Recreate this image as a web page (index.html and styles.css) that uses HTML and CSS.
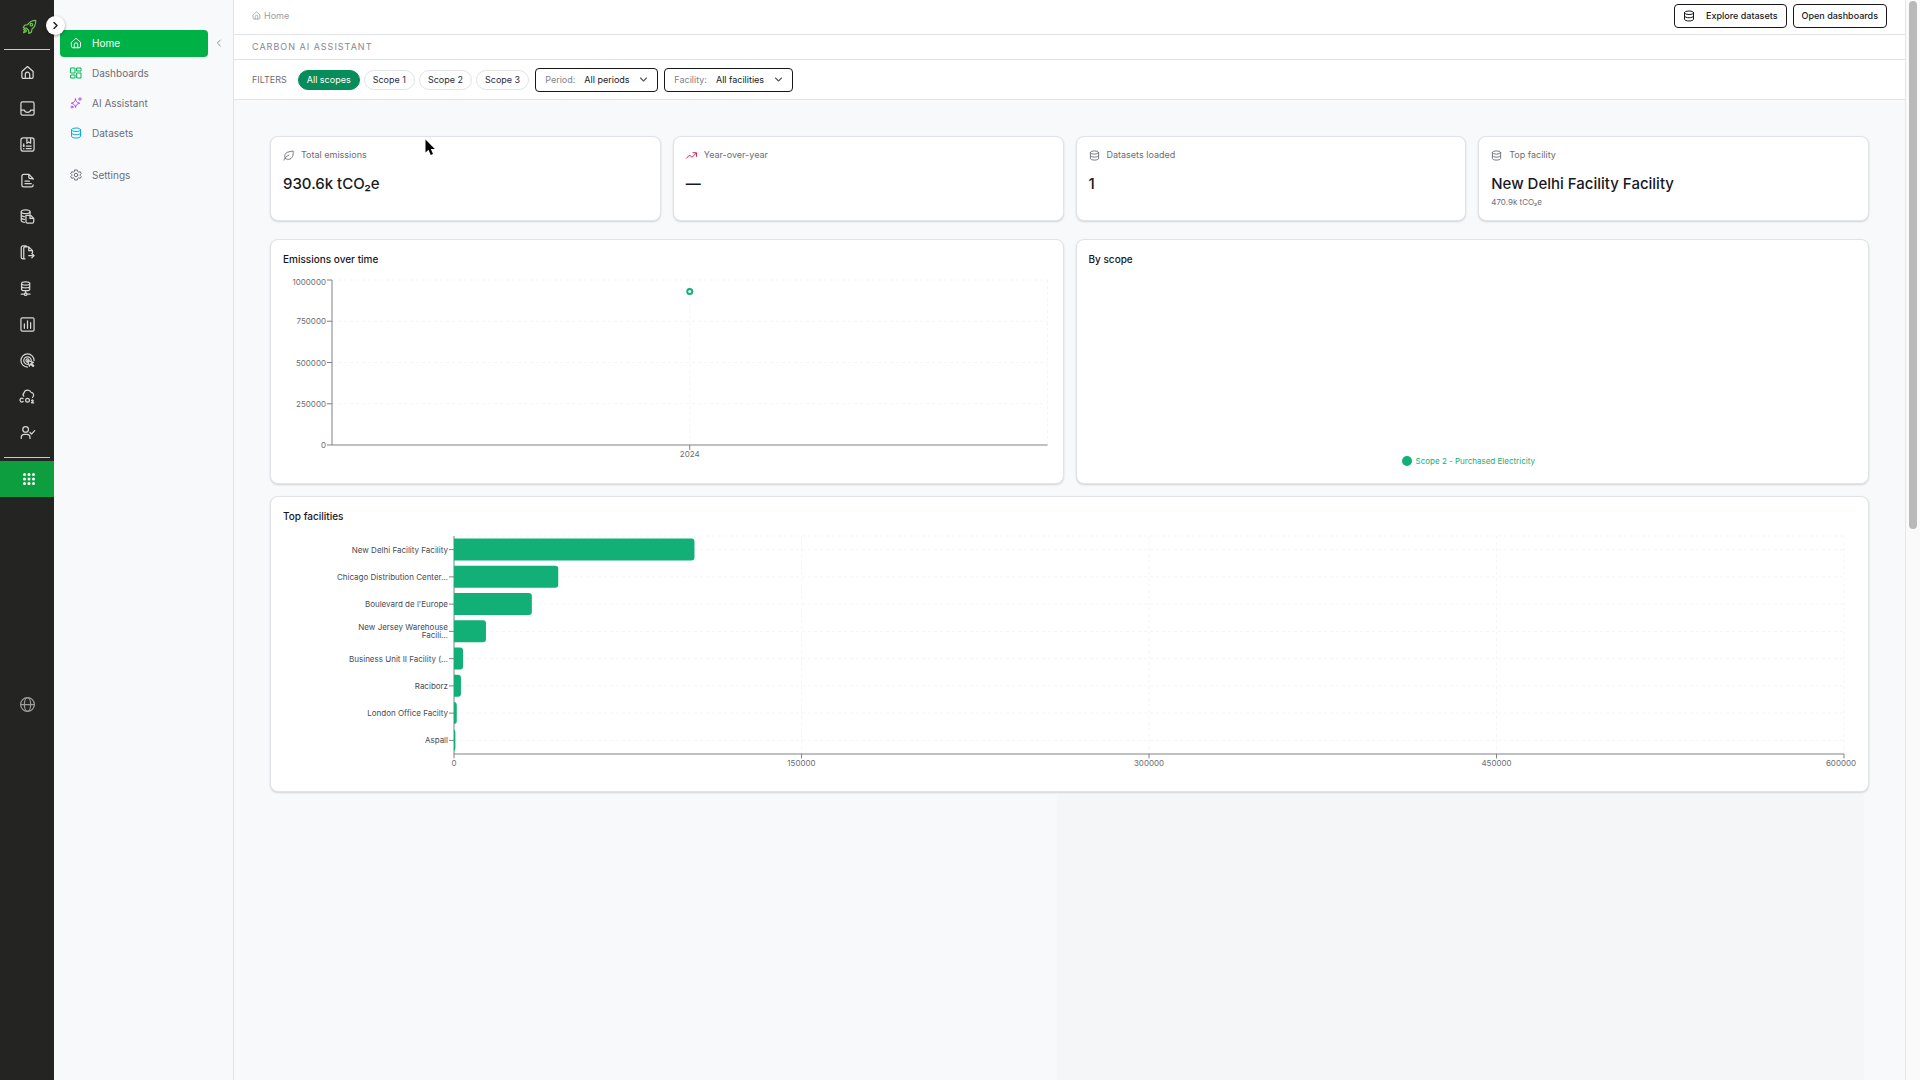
FILE: index.html
```html
<!DOCTYPE html>
<html lang="en">
<head>
    <meta charset="UTF-8">
    <title>Carbon AI Assistant</title>
    <meta name="viewport" content="width=device-width, initial-scale=1.0">
    <link rel="stylesheet" href="styles.css">
</head>
<body>
    <!-- shared icons -->
    <svg class="sprite" aria-hidden="true">
        <symbol id="i-home" viewBox="0 0 24 24">
            <path d="M3 10.5 12 2.5l9 8V19a2.5 2.5 0 0 1-2.5 2.5h-13A2.5 2.5 0 0 1 3 19z"/>
            <path d="M8.5 21.5V15a3.5 3.5 0 0 1 7 0v6.5"/>
        </symbol>
        <symbol id="i-data" viewBox="0 0 24 24">
            <ellipse cx="12" cy="5.5" rx="9" ry="3.5"/>
            <path d="M3 5.5v13C3 20.4 7 22 12 22s9-1.6 9-3.5v-13"/>
            <path d="M3 12c0 1.9 4 3.5 9 3.5s9-1.6 9-3.5"/>
        </symbol>
        <symbol id="i-down" viewBox="0 0 24 24"><path d="m4 8 8 8 8-8"/></symbol>
    </svg>

    <div class="app">
        <!-- PRODUCT RAIL -->
        <nav class="rail" aria-label="Products">
            <a href="#" class="rail-logo" title="Launch">
                <svg class="icon" viewBox="0 0 24 24"><path d="M22 2c-6 0-10 2-13 7l-5 1-2 4 5 .5 3.5 3.5.5 5 4-2 1-5c5-3 6-7 6-14z"/><circle cx="15" cy="9" r="2"/><path d="M6 17c-2 1-3 3-3.5 5 2-.3 4-1.3 5-3.2M2.5 17l2-2"/></svg>
            </a>
            <hr>
            <a href="#" title="Home"><svg class="icon"><use href="#i-home"/></svg></a>
            <a href="#" title="Inbox"><svg class="icon" viewBox="0 0 24 24"><rect x="1.5" y="1.5" width="21" height="21" rx="2.5"/><path d="M2 14.5h5c.5 2.5 2.5 3.5 5 3.5s4.5-1 5-3.5h5"/></svg></a>
            <a href="#" title="Templates"><svg class="icon" viewBox="0 0 24 24"><rect x="1.5" y="1.5" width="21" height="21" rx="3.5"/><path d="M11 2v8l3-2 3 2V2M6 11v4M6 18.5v.5M10 14.5h8M10 18.5h8M5 14h2"/></svg></a>
            <a href="#" title="Reports"><svg class="icon" viewBox="0 0 24 24"><path d="M21 10v-1l-7-7H6a3 3 0 0 0-3 3v14a3 3 0 0 0 3 3h12a3 3 0 0 0 3-3M14 2v4a3 3 0 0 0 3 3h4M8 13h7M8 17h10"/></svg></a>
            <a href="#" title="Data files"><svg class="icon" viewBox="0 0 24 24"><ellipse cx="9" cy="4.5" rx="7" ry="3"/><path d="M2 4.5v14c0 1.3 2 2.5 5 3M2 9.5c0 1.2 2 2.2 5 2.6M2 14c0 1.2 2 2.2 5 2.6M16 4.5V8M10 10h7l5 5v5a2.5 2.5 0 0 1-2.5 2.5H12A2.5 2.5 0 0 1 9.5 20v-10zM16 10.5V15h5"/></svg></a>
            <a href="#" title="Exports"><svg class="icon" viewBox="0 0 24 24"><path d="M8 22H5a3 3 0 0 1-3-3V4a2.5 2.5 0 0 1 2.5-2.5H10M6 4.5V22M6 5a2 2 0 0 1 2-2h6l6 6v3M14 3v6h6M14 17h8M19 13.5l3.5 3.5-3.5 3.5"/></svg></a>
            <a href="#" title="Pipelines"><svg class="icon" viewBox="0 0 24 24"><ellipse cx="9" cy="4" rx="6.5" ry="2.5"/><path d="M2.5 4v9c0 1.4 3 2.5 6.5 2.5s6.5-1.1 6.5-2.5V4M2.5 8.5C2.5 10 5.5 11 9 11s6.5-1 6.5-2.5M9 15.5V19M2 21h4.5M11.5 21H16"/><circle cx="9" cy="21" r="2"/></svg></a>
            <a href="#" title="Analytics"><svg class="icon" viewBox="0 0 24 24"><rect x="1.5" y="1.5" width="21" height="21" rx="2"/><path d="M7 11v7M12 6v12M17 9v9"/></svg></a>
            <a href="#" title="Targets"><svg class="icon" viewBox="0 0 24 24"><path d="M22.5 12A10.5 10.5 0 1 0 12 22.5M18 12a6 6 0 1 0-6 6M12 12l3 9 2-3.5 4 4 1-1-4-4 3.5-1.5z"/><circle cx="12" cy="12" r="2.5"/></svg></a>
            <a href="#" title="Carbon">
                <svg class="icon" viewBox="0 0 24 24"><path d="M6 11.5a4 4 0 0 1 .5-5.5 6 6 0 0 1 11.3-.6A4.5 4.5 0 0 1 20 13.5"/><path d="M5 15.5a3 3 0 1 0 0 4.5"/><circle cx="12" cy="17.8" r="3"/><path d="M18.5 18.5c1-1.5 3-1 2.7.5L18.5 22H22"/></svg>
            </a>
            <a href="#" title="Approvals"><svg class="icon" viewBox="0 0 24 24"><circle cx="9" cy="7" r="4.5"/><path d="M2 21.5V20a5 5 0 0 1 5-5h4a5 5 0 0 1 5 5v1.5M16 12l2.5 2.5 5-5.5"/></svg></a>
            <hr class="rail-end">
            <a href="#" class="rail-active" title="All apps">
                <svg class="icon-dots" viewBox="0 0 12 12"><circle cx="1.5" cy="1.5" r="1.5"/><circle cx="6" cy="1.5" r="1.5"/><circle cx="10.5" cy="1.5" r="1.5"/><circle cx="1.5" cy="6" r="1.5"/><circle cx="6" cy="6" r="1.5"/><circle cx="10.5" cy="6" r="1.5"/><circle cx="1.5" cy="10.5" r="1.5"/><circle cx="6" cy="10.5" r="1.5"/><circle cx="10.5" cy="10.5" r="1.5"/></svg>
            </a>
            <a href="#" class="rail-globe" title="Language"><svg class="icon" viewBox="0 0 24 24"><circle cx="12" cy="12" r="11"/><ellipse cx="12" cy="12" rx="5" ry="11"/><path d="M1 12h22"/></svg></a>
            <button class="rail-toggle" type="button" aria-label="Expand menu"><svg class="icon" viewBox="0 0 24 24"><path d="m8 4 8 8-8 8"/></svg></button>
        </nav>

        <!-- SECTION MENU -->
        <aside class="sidebar">
            <nav class="menu" aria-label="Carbon AI Assistant">
                <a href="#" class="menu-item active"><svg class="icon"><use href="#i-home"/></svg>Home</a>
                <a href="#" class="menu-item"><svg class="icon green" viewBox="0 0 24 24"><rect x="2" y="2" width="8" height="10"/><rect x="14" y="2" width="8" height="6"/><rect x="2" y="16" width="8" height="6"/><rect x="14" y="12" width="8" height="10"/></svg>Dashboards</a>
                <a href="#" class="menu-item"><svg class="icon purple" viewBox="0 0 24 24"><path d="M11 4c.8 5 2.5 7 8.5 8.5-6 1.5-7.7 3.5-8.5 8.5-.8-5-2.5-7-8.5-8.5C8.5 11 10.2 9 11 4zM20 1v6M17 4h6"/><circle cx="4" cy="20" r="2"/></svg>AI Assistant</a>
                <a href="#" class="menu-item"><svg class="icon cyan"><use href="#i-data"/></svg>Datasets</a>
                <a href="#" class="menu-item settings"><svg class="icon" viewBox="0 0 24 24"><path d="M9.5 2h5l.8 3 2.2 1.3 3-.8 2 3.5-2.2 2.2v1.6l2.2 2.2-2 3.5-3-.8-2.2 1.3-.8 3h-5l-.8-3-2.200-1.300-3 .8-2-3.500 2.200-2.200v-1.600L1.500 9l2-3.500 3 .8L8.700 5z"/><circle cx="12" cy="12" r="3.5"/></svg>Settings</a>
            </nav>
            <button class="collapse" type="button" aria-label="Collapse menu"><svg class="icon" viewBox="0 0 24 24"><path d="m16 3-9 9 9 9"/></svg></button>
        </aside>

        <main class="main">
            <header class="topbar">
                <a href="#" class="crumb"><svg class="icon"><use href="#i-home"/></svg>Home</a>
                <div class="actions">
                    <button class="btn" type="button"><svg class="icon"><use href="#i-data"/></svg>Explore datasets</button>
                    <button class="btn" type="button">Open dashboards</button>
                </div>
            </header>
            <h1 class="page-title">CARBON AI ASSISTANT</h1>

            <div class="filters">
                <span class="filters-title">FILTERS</span>
                <div class="pills">
                    <button class="pill on" type="button">All scopes</button>
                    <button class="pill" type="button">Scope 1</button>
                    <button class="pill" type="button">Scope 2</button>
                    <button class="pill" type="button">Scope 3</button>
                </div>
                <div class="drop">
                    <label for="period">Period:</label>
                    <select id="period"><option>All periods</option></select>
                    <svg class="icon"><use href="#i-down"/></svg>
                </div>
                <div class="drop">
                    <label for="facility">Facility:</label>
                    <select id="facility"><option>All facilities</option></select>
                    <svg class="icon"><use href="#i-down"/></svg>
                </div>
            </div>

            <div class="content">
                <section class="stats">
                    <div class="card">
                        <div class="stat-label"><svg class="icon" viewBox="0 0 24 24"><path d="M2 22c2-5 5-8 11-11M5 18c-3-6-1-12 8-14 4-.8 7-1 9-2 1 8-1 18-10 18.5-3 .2-5-.8-7-2.5z"/></svg>Total emissions</div>
                        <div class="stat-value">930.6k tCO₂e</div>
                    </div>
                    <div class="card">
                        <div class="stat-label"><svg class="icon red" viewBox="0 0 24 24"><path d="m1 18 7-7 5 5 9-9M15 6h8v8"/></svg>Year-over-year</div>
                        <div class="stat-value">—</div>
                    </div>
                    <div class="card">
                        <div class="stat-label"><svg class="icon"><use href="#i-data"/></svg>Datasets loaded</div>
                        <div class="stat-value">1</div>
                    </div>
                    <div class="card">
                        <div class="stat-label"><svg class="icon"><use href="#i-data"/></svg>Top facility</div>
                        <div class="stat-value">New Delhi Facility Facility</div>
                        <div class="stat-note">470.9k tCO₂e</div>
                    </div>
                </section>

                <section class="charts">
                    <div class="card">
                        <h2>Emissions over time</h2>
                        <div class="line-chart">
                            <svg class="plot" role="img" aria-label="Emissions over time">
                                <g class="grid">
                                    <line x1="0" x2="100%" y1="0" y2="0"/>
                                    <line x1="0" x2="100%" y1="25%" y2="25%"/>
                                    <line x1="0" x2="100%" y1="50%" y2="50%"/>
                                    <line x1="0" x2="100%" y1="75%" y2="75%"/>
                                    <line x1="50%" x2="50%" y1="0" y2="100%"/>
                                    <line x1="100%" x2="100%" y1="0" y2="100%"/>
                                </g>
                                <g class="axis">
                                    <line x1="0" x2="0" y1="0" y2="100%"/>
                                    <line x1="0" x2="100%" y1="100%" y2="100%"/>
                                    <line x1="-5" x2="0" y1="0" y2="0"/>
                                    <line x1="-5" x2="0" y1="25%" y2="25%"/>
                                    <line x1="-5" x2="0" y1="50%" y2="50%"/>
                                    <line x1="-5" x2="0" y1="75%" y2="75%"/>
                                    <line x1="-5" x2="0" y1="100%" y2="100%"/>
                                    <line x1="50%" x2="50%" y1="100%" y2="103%"/>
                                </g>
                                <g class="ticks-y">
                                    <text x="-6" y="0" dy="5">1000000</text>
                                    <text x="-6" y="25%" dy="3">750000</text>
                                    <text x="-6" y="50%" dy="3">500000</text>
                                    <text x="-6" y="75%" dy="3">250000</text>
                                    <text x="-6" y="100%" dy="3">0</text>
                                </g>
                                <text class="tick-x" x="50%" y="100%" dy="12">2024</text>
                                <circle class="dot" cx="50%" cy="7%" r="2.5"/>
                            </svg>
                        </div>
                    </div>
                    <div class="card scope-card">
                        <h2>By scope</h2>
                        <div class="legend"><span class="legend-dot"></span>Scope 2 - Purchased Electricity</div>
                    </div>
                </section>

                <section class="card">
                    <h2>Top facilities</h2>
                    <div class="bar-chart">
                        <svg class="plot" role="img" aria-label="Top facilities">
                            <g class="grid">
                                <line x1="0" x2="100%" y1="0" y2="0"/>
                                <line x1="0" x2="100%" y1="6.25%" y2="6.25%"/>
                                <line x1="0" x2="100%" y1="18.75%" y2="18.75%"/>
                                <line x1="0" x2="100%" y1="31.25%" y2="31.25%"/>
                                <line x1="0" x2="100%" y1="43.75%" y2="43.75%"/>
                                <line x1="0" x2="100%" y1="56.25%" y2="56.25%"/>
                                <line x1="0" x2="100%" y1="68.75%" y2="68.75%"/>
                                <line x1="0" x2="100%" y1="81.25%" y2="81.25%"/>
                                <line x1="0" x2="100%" y1="93.75%" y2="93.75%"/>
                                <line x1="25%" x2="25%" y1="0" y2="100%"/>
                                <line x1="50%" x2="50%" y1="0" y2="100%"/>
                                <line x1="75%" x2="75%" y1="0" y2="100%"/>
                                <line x1="100%" x2="100%" y1="0" y2="100%"/>
                            </g>
                            <g class="axis">
                                <line x1="0" x2="0" y1="0" y2="100%"/>
                                <line x1="0" x2="100%" y1="100%" y2="100%"/>
                                <line x1="-5" x2="0" y1="6.25%" y2="6.25%"/>
                                <line x1="-5" x2="0" y1="18.75%" y2="18.75%"/>
                                <line x1="-5" x2="0" y1="31.25%" y2="31.25%"/>
                                <line x1="-5" x2="0" y1="43.75%" y2="43.75%"/>
                                <line x1="-5" x2="0" y1="56.25%" y2="56.25%"/>
                                <line x1="-5" x2="0" y1="68.75%" y2="68.75%"/>
                                <line x1="-5" x2="0" y1="81.25%" y2="81.25%"/>
                                <line x1="-5" x2="0" y1="93.75%" y2="93.75%"/>
                                <line x1="0" x2="0" y1="100%" y2="102%"/>
                                <line x1="25%" x2="25%" y1="100%" y2="102%"/>
                                <line x1="50%" x2="50%" y1="100%" y2="102%"/>
                                <line x1="75%" x2="75%" y1="100%" y2="102%"/>
                                <line x1="100%" x2="100%" y1="100%" y2="102%"/>
                            </g>
                            <!-- bars start left of the axis so only the right corners look round -->
                            <svg class="bars">
                                <rect y="1.2%" style="width: calc(17.3% + 4px)"/>
                                <rect y="13.7%" style="width: calc(7.5% + 4px)"/>
                                <rect y="26.2%" style="width: calc(5.6% + 4px)"/>
                                <rect y="38.7%" style="width: calc(2.3% + 4px)"/>
                                <rect y="51.2%" style="width: calc(0.65% + 4px)"/>
                                <rect y="63.7%" style="width: calc(0.5% + 4px)"/>
                                <rect y="76.2%" style="width: calc(0.2% + 4px)"/>
                                <rect y="88.7%" style="width: calc(0.1% + 4px)"/>
                            </svg>
                            <g class="ticks-y names">
                                <text x="-6" y="6.25%" dy="3">New Delhi Facility Facility</text>
                                <text x="-6" y="18.75%" dy="3">Chicago Distribution Center…</text>
                                <text x="-6" y="31.25%" dy="3">Boulevard de l'Europe</text>
                                <text x="-6" y="43.75%" dy="-1">New Jersey Warehouse</text>
                                <text x="-6" y="43.75%" dy="7">Facili…</text>
                                <text x="-6" y="56.25%" dy="3">Business Unit II Facility (…</text>
                                <text x="-6" y="68.75%" dy="3">Raciborz</text>
                                <text x="-6" y="81.25%" dy="3">London Office Facilty</text>
                                <text x="-6" y="93.75%" dy="3">Aspall</text>
                            </g>
                            <g class="tick-x">
                                <text x="0" y="100%" dy="12">0</text>
                                <text x="25%" y="100%" dy="12">150000</text>
                                <text x="50%" y="100%" dy="12">300000</text>
                                <text x="75%" y="100%" dy="12">450000</text>
                                <text x="100%" y="100%" dx="-3" dy="12">600000</text>
                            </g>
                        </svg>
                    </div>
                </section>
                <!-- still loading -->
                <div class="pending"></div>
            </div>
        </main>
        <div class="scroll" aria-hidden="true"><div class="scroll-thumb"></div></div>
    </div>

    <svg class="pointer" viewBox="0 0 10 17" aria-hidden="true"><path d="M.5.5v13l3-2.7 2.2 5.2 2.3-1-2.2-5h4z"/></svg>
</body>
</html>
```
FILE: styles.css
```css
* {
    box-sizing: border-box;
}
html, body {
    height: 100%;
    margin: 0;
    padding: 0;
}
body {
    font-family: Inter, "Liberation Sans", sans-serif;
    font-size: 9px;
    line-height: 12px;
    color: #18181f;
    background: #f8f9fb;
    overflow: hidden;
}
a {
    color: inherit;
    text-decoration: none;
}
button, select {
    font: inherit;
    color: inherit;
    background: none;
    border: 0;
    margin: 0;
    padding: 0;
    cursor: pointer;
}
.sprite {
    display: none;
}
.icon {
    width: 12px;
    height: 12px;
    fill: none;
    stroke: currentColor;
    stroke-width: 2;
    stroke-linecap: round;
    stroke-linejoin: round;
    flex: none;
    overflow: visible;
}
.app {
    display: flex;
    height: 100vh;
}

/* RAIL */
.rail {
    position: relative;
    flex: none;
    width: 54px;
    background: #242522;
    color: #d6d6d4;
    display: flex;
    flex-direction: column;
}
.rail a {
    height: 36px;
    display: flex;
    align-items: center;
    justify-content: center;
}
.rail .icon {
    width: 15px;
    height: 15px;
}
.rail hr {
    width: 46px;
    height: 1px;
    margin: 5px auto 4px;
    border: 0;
    background: #c9c9c7;
}
.rail .rail-end {
    margin: 7px auto 3px;
}
.rail .rail-logo {
    margin-top: 8px;
    padding-left: 4px;
    color: #6cc04f;
}
.rail .rail-active {
    background: #0d9f3f;
    padding-left: 4px;
}
.icon-dots {
    width: 12px;
    height: 12px;
    fill: #fff;
}
.rail .rail-globe {
    margin-top: 189px;
    color: #9c9c99;
}
.rail-toggle {
    position: absolute;
    z-index: 3;
    top: 16px;
    right: -11px;
    width: 19px;
    height: 19px;
    border-radius: 50%;
    background: #fff;
    color: #222;
    box-shadow: 0 1px 3px #0006;
    display: flex;
    align-items: center;
    justify-content: center;
}
.rail .rail-toggle .icon {
    width: 9px;
    height: 9px;
    stroke-width: 4;
}

/* SIDEBAR */
.sidebar {
    flex: none;
    width: 180px;
    padding: 30px 9px 0 6px;
    border-right: 1px solid #e1e3e6;
    display: flex;
    align-items: flex-start;
    gap: 6px;
}
.menu {
    flex: 1;
    display: flex;
    flex-direction: column;
    gap: 3px;
}
.menu-item {
    height: 27px;
    padding: 0 10px 1px;
    border-radius: 4px;
    display: flex;
    align-items: center;
    gap: 10px;
    font-size: 10px;
    color: #6b6e78;
}
.menu-item.active {
    background: #00b145;
    color: #fff;
}
.menu-item.settings {
    margin-top: 12px;
}
.green { color: #00b84f; }
.purple { color: #b44df0; }
.cyan { color: #00aeea; }
.red { color: #c8103e; }
.collapse {
    width: 10px;
    height: 27px;
    color: #8b8e96;
}
.collapse .icon {
    width: 8px;
    height: 8px;
    stroke-width: 3;
}

/* MAIN */
.main {
    flex: 1;
    min-width: 0;
    overflow: hidden;
}
.topbar {
    height: 35px;
    padding: 0 18px 3px;
    background: #fff;
    border-bottom: 1px solid #e1e3e6;
    display: flex;
    align-items: center;
    justify-content: space-between;
}
.crumb {
    display: flex;
    align-items: center;
    gap: 3px;
    color: #9a9ca3;
}
.crumb .icon {
    width: 9px;
    height: 9px;
}
.actions {
    display: flex;
    gap: 6px;
}
.btn {
    height: 24px;
    padding: 0 8px;
    border: 1px solid #18181b;
    border-radius: 4px;
    background: #fff;
    font-weight: 500;
    display: flex;
    align-items: center;
    gap: 11px;
}
.btn .icon {
    width: 12px;
    height: 12px;
}
.page-title {
    height: 25px;
    margin: 0;
    padding: 0 18px;
    background: #fff;
    border-bottom: 1px solid #e1e3e6;
    font-size: 9px;
    line-height: 24px;
    font-weight: 400;
    letter-spacing: 1px;
    color: #858893;
}
.filters {
    height: 40px;
    padding: 0 18px;
    background: #fff;
    border-bottom: 1px solid #e1e3e6;
    display: flex;
    align-items: center;
    gap: 6px;
}
.filters-title {
    margin-right: 5px;
    color: #6b6e78;
}
.pills {
    display: flex;
    gap: 4px;
}
.pill {
    height: 20px;
    padding: 0 8px;
    border: 1px solid #e1e3e6;
    border-radius: 10px;
    background: #fff;
    color: #2a2b3a;
}
.pill.on {
    background: #078c5b;
    border-color: #078c5b;
    color: #fff;
}
.drop {
    height: 24px;
    padding: 0 9px;
    border: 1px solid #18181b;
    border-radius: 4px;
    display: flex;
    align-items: center;
    gap: 9px;
}
.drop label {
    color: #80838c;
}
.drop select {
    appearance: none;
}
.drop .icon {
    width: 9px;
    height: 9px;
    stroke-width: 3;
    color: #55575e;
    pointer-events: none;
}
.content {
    padding: 36px 36px 0;
    display: flex;
    flex-direction: column;
    gap: 12px;
}
.card {
    min-width: 0;
    padding: 12px;
    background: #fff;
    border: 1px solid #e0e3e8;
    border-radius: 8px;
    box-shadow: 0 1px 2px #00000026;
}
.stats {
    display: grid;
    grid-template-columns: repeat(4, 1fr);
    gap: 12px;
    margin-bottom: 6px;
}
.stats .card {
    min-height: 85px;
}
.stat-label {
    display: flex;
    align-items: center;
    gap: 7px;
    color: #6b6e78;
}
.stat-label .icon {
    width: 11px;
    height: 11px;
}
.stat-value {
    margin-top: 12px;
    font-size: 15px;
    line-height: 22px;
    font-weight: 500;
}
.stat-note {
    margin-top: 1px;
    font-size: 8px;
    color: #6b6e78;
}
.charts {
    display: grid;
    grid-template-columns: repeat(2, 1fr);
    gap: 12px;
}
h2 {
    margin: 0;
    font-size: 10px;
    line-height: 14px;
    font-weight: 500;
}
.line-chart {
    height: 205px;
    padding: 14px 3px 0 49px;
}
.bar-chart {
    height: 256px;
    padding: 13px 12px 0 171px;
}
.plot {
    display: block;
    width: 100%;
    overflow: visible;
    font-size: 8px;
}
.line-chart .plot {
    height: 165px;
}
.bar-chart .plot {
    height: 218px;
}
.grid line {
    stroke: #f5f5f7;
    stroke-dasharray: 3 3;
}
.axis line {
    stroke: #7f8184;
}
.plot text {
    fill: #6b6d72;
}
.ticks-y {
    text-anchor: end;
}
.plot .names text {
    fill: #484a55;
}
.tick-x {
    text-anchor: middle;
}
.dot {
    fill: #fff;
    stroke: #10b077;
    stroke-width: 2;
}
.bars rect {
    x: -4px;
    height: 22px;
    rx: 3px;
    fill: #12b076;
}
.scope-card {
    display: flex;
    flex-direction: column;
    justify-content: space-between;
}
.legend {
    display: flex;
    align-items: center;
    justify-content: center;
    gap: 4px;
    padding: 0 8px 4px 0;
    font-size: 8px;
    color: #12b076;
}
.legend-dot {
    width: 10px;
    height: 10px;
    border-radius: 50%;
    background: #12b076;
}
.pending {
    width: calc(50% + 8px);
    height: 400px;
    margin: -10px 5px 0 auto;
    background: #f5f6f8;
}

/* SCROLLBAR */
.scroll {
    flex: none;
    width: 15px;
    padding: 1px 3px;
    border-left: 1px solid #e6e6e6;
    background: #fafafa;
}
.scroll-thumb {
    height: 49%;
    border-radius: 4px;
    background: #b9b9b9;
}

.pointer {
    position: absolute;
    z-index: 20;
    left: 425px;
    top: 139px;
    width: 10px;
    height: 17px;
    fill: #000;
    stroke: #fff;
    stroke-width: 1;
    paint-order: stroke;
}
```
